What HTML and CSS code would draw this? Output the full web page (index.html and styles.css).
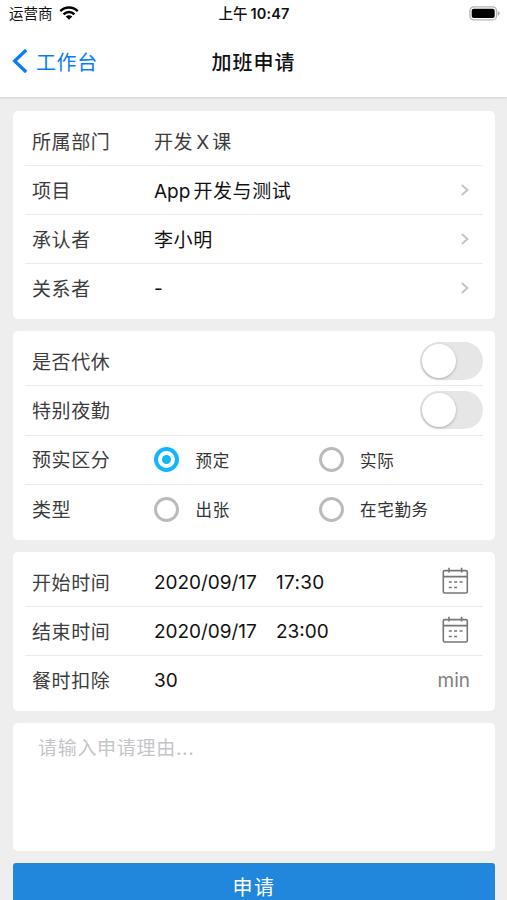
FILE: index.html
```html
<!DOCTYPE html>
<html lang="zh-CN">
<head>
<meta charset="utf-8">
<title>加班申请</title>
<link rel="stylesheet" href="styles.css">
</head>
<body>
<svg class="defs" width="0" height="0">
  <symbol id="chevron" viewBox="0 0 10 14"><path d="M1.8 2 7.4 7 1.8 12" fill="none" stroke="#c5c5c5" stroke-width="2"/></symbol>
  <symbol id="calendar" viewBox="0 0 28 28"><g fill="none" stroke="#777" stroke-width="1.6"><rect x="2.3" y="3.6" width="24" height="22.4" rx="1.4"/><path d="M2.3 9.6H26.3M8 .8V5.4M20.6 .8V5.4"/><path d="M7.8 15h3M13.1 15h3M18.6 15h3M7.8 20.5h3M13.1 20.5h3"/></g></symbol>
</svg>
<header class="header">
  <div class="status">
    <div class="carrier">运营商
      <svg width="20" height="14" viewBox="0 0 20 14"><g fill="none" stroke="#000" stroke-width="2.5"><path d="M1.3 5.1C6.3.2 13.7.2 18.7 5.1"/><path d="M4.5 8.4C7.8 5.3 12.2 5.3 15.5 8.4"/></g><path d="M6.7 10.5C8.7 8.8 11.3 8.8 13.3 10.5L10 13.7Z"/></svg>
    </div>
    <div class="clock">上午<span>10:47</span></div>
    <div class="battery"><svg width="31" height="15" viewBox="0 0 31 15"><rect x=".9" y=".9" width="26.6" height="13" rx="4" fill="#fff" stroke="#b5b5b5" stroke-width="1.3"/><rect x="2.7" y="2.7" width="23" height="9.4" rx="2"/><path d="M28.8 5q1.8.6 1.8 2.4t-1.8 2.4Z" fill="#aaa"/></svg></div>
  </div>
  <nav class="nav">
    <a class="back"><svg width="16" height="26" viewBox="0 0 16 26"><path d="M14.2 2 2.6 13 14.2 24" fill="none" stroke="#0a7aff" stroke-width="3.2"/></svg>工作台</a>
    <h1>加班申请</h1>
    <span></span>
  </nav>
</header>
<main class="form">
  <section class="card">
    <div class="row"><span class="label">所属部门</span><span class="value muted">开发<span class="en mid">X</span>课</span></div>
    <div class="row"><span class="label">项目</span><span class="value"><span class="en lead">App</span>开发与测试</span><svg class="chev"><use href="#chevron"/></svg></div>
    <div class="row"><span class="label">承认者</span><span class="value">李小明</span><svg class="chev"><use href="#chevron"/></svg></div>
    <div class="row"><span class="label">关系者</span><span class="value dash">-</span><svg class="chev"><use href="#chevron"/></svg></div>
  </section>
  <section class="card options">
    <div class="row"><span class="label">是否代休</span><span class="value"></span><span class="switch"></span></div>
    <div class="row"><span class="label">特别夜勤</span><span class="value"></span><span class="switch"></span></div>
    <div class="row"><span class="label">预实区分</span><div class="radios"><span class="radio"><i class="dot on"></i>预定</span><span class="radio"><i class="dot"></i>实际</span></div></div>
    <div class="row"><span class="label">类型</span><div class="radios"><span class="radio"><i class="dot"></i>出张</span><span class="radio"><i class="dot"></i>在宅勤务</span></div></div>
  </section>
  <section class="card times">
    <div class="row"><span class="label">开始时间</span><span class="value num"><span class="date">2020/09/17</span><span class="early">17:30</span></span><svg class="cal"><use href="#calendar"/></svg></div>
    <div class="row"><span class="label">结束时间</span><span class="value num"><span class="date">2020/09/17</span><span>23:00</span></span><svg class="cal"><use href="#calendar"/></svg></div>
    <div class="row"><span class="label">餐时扣除</span><span class="value num">30</span><span class="unit">min</span></div>
  </section>
  <section class="card reason">请输入申请理由...</section>
  <div class="submit">申请</div>
</main>
</body>
</html>
```
FILE: styles.css
```css
* { box-sizing: border-box; }
html, body { height: 100%; overflow: hidden; }
body {
  margin: 0;
  background: #eee;
  color: #111;
  font-family: Inter, "Noto Sans CJK SC", sans-serif;
}
.defs { display: block; height: 0; }
svg { flex: none; }

.header {
  height: 97px;
  background: #fff;
  box-shadow: 0 1px 2px rgba(0, 0, 0, .12);
}
.status {
  display: grid;
  grid-template-columns: 1fr auto 1fr;
  height: 27px;
  padding: 0 7px 0 9px;
  font-size: 14.5px;
  line-height: 27px;
}
.carrier { display: flex; align-items: center; gap: 6px; }
.carrier svg { margin-top: -2px; }
.clock { display: flex; gap: 3px; margin-left: -1px; font-weight: 500; }
.clock span { font-weight: 600; font-size: 14.5px; letter-spacing: .15px; }
.battery { display: flex; justify-content: flex-end; align-items: center; }
.nav {
  display: grid;
  grid-template-columns: 1fr auto 1fr;
  align-items: center;
  height: 68px;
  padding: 0 12px;
}
.back {
  display: flex;
  align-items: center;
  gap: 8px;
  color: #0a7aff;
  font-size: 20px;
  letter-spacing: .6px;
}
.nav h1 {
  margin: 0;
  font-size: 20px;
  font-weight: 500;
  letter-spacing: 1px;
}

.form {
  display: flex;
  flex-direction: column;
  gap: 12px;
  padding: 14px 12px 0 13px;
}
.card {
  flex: none;
  padding: 6px 12px;
  height: 208px;
  border-radius: 5px;
  background: #fff;
}
.options { height: 209px; }
.times { height: 159px; }
.row {
  display: flex;
  align-items: center;
  height: 49px;
  padding-left: 6px;
  border-bottom: 1px solid #ebebeb;
}
.options .row { height: 49.3px; }
.row:last-child { border-bottom-color: transparent; }
.label {
  width: 123px;
  padding: 0 0 2px 1px;
  color: #3c3c3c;
  font-size: 19px;
  letter-spacing: .6px;
}
.value {
  flex: 1;
  padding-bottom: 2px;
  font-size: 19px;
  letter-spacing: .6px;
}
.muted { color: #3c3c3c; }
.en { letter-spacing: 0; }
.mid { margin: 0 3px; }
.lead { margin-right: 3px; }
.num { display: flex; padding-bottom: 0; letter-spacing: 0; }
.dash { padding-bottom: 0; }
.date { width: 122px; letter-spacing: -.05px; }
.early { letter-spacing: .3px; }
.chev { width: 10px; height: 14px; margin-right: 13px; }
.cal { width: 28px; height: 28px; margin: 0 14px 2px 0; }
.unit { margin-right: 13px; color: #808080; font-size: 19px; }

.switch {
  width: 63px;
  height: 38px;
  padding: 2px;
  border-radius: 19px;
  background: #e6e6e6;
}
.switch::before {
  content: "";
  display: block;
  width: 34px;
  height: 34px;
  border-radius: 50%;
  background: #fff;
  box-shadow: 0 1px 3px rgba(0, 0, 0, .25);
}
.radios { display: flex; flex: 1; }
.radio {
  display: flex;
  align-items: center;
  gap: 16.5px;
  width: 164.5px;
  color: #333;
  font-size: 16.5px;
  letter-spacing: .7px;
}
.dot {
  display: flex;
  align-items: center;
  justify-content: center;
  width: 25px;
  height: 25px;
  border: 3.5px solid #bbb;
  border-radius: 50%;
}
.on { border-color: #12b7f9; border-width: 4px; }
.on::before {
  content: "";
  width: 9px;
  height: 9px;
  border-radius: 50%;
  background: #12b7f9;
}
.reason {
  height: 128px;
  padding: 10px 25px;
  color: #c5c5c9;
  font-size: 19px;
  letter-spacing: .7px;
}
.submit {
  height: 49px;
  border-radius: 3px;
  background: #2187dc;
  color: #fff;
  font-size: 20px;
  line-height: 50px;
  letter-spacing: 1.5px;
  text-align: center;
}
```
